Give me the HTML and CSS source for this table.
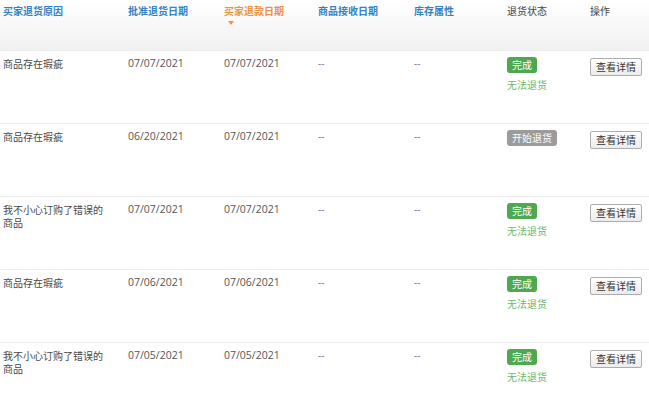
FILE: index.html
```html
<!DOCTYPE html>
<html lang="zh">
<head>
<meta charset="utf-8">
<link rel="stylesheet" href="styles.css">
</head>
<body>
<div class="table">
  <div class="row head">
    <div class="cell th blue">买家退货原因</div>
    <div class="cell th blue">批准退货日期</div>
    <div class="cell th orange">买家退款日期<span class="caret"></span></div>
    <div class="cell th blue">商品接收日期</div>
    <div class="cell th blue">库存属性</div>
    <div class="cell th dark">退货状态</div>
    <div class="cell th dark">操作</div>
  </div>

  <div class="row">
    <div class="cell reason">商品存在瑕疵</div>
    <div class="cell date">07/07/2021</div>
    <div class="cell date">07/07/2021</div>
    <div class="cell dash">--</div>
    <div class="cell dash">--</div>
    <div class="cell status"><span class="badge ok">完成</span><span class="note">无法退货</span></div>
    <div class="cell action"><button class="btn">查看详情</button></div>
  </div>

  <div class="row">
    <div class="cell reason">商品存在瑕疵</div>
    <div class="cell date">06/20/2021</div>
    <div class="cell date">07/07/2021</div>
    <div class="cell dash">--</div>
    <div class="cell dash">--</div>
    <div class="cell status"><span class="badge gray">开始退货</span></div>
    <div class="cell action"><button class="btn">查看详情</button></div>
  </div>

  <div class="row">
    <div class="cell reason">我不小心订购了错误的商品</div>
    <div class="cell date">07/07/2021</div>
    <div class="cell date">07/07/2021</div>
    <div class="cell dash">--</div>
    <div class="cell dash">--</div>
    <div class="cell status"><span class="badge ok">完成</span><span class="note">无法退货</span></div>
    <div class="cell action"><button class="btn">查看详情</button></div>
  </div>

  <div class="row">
    <div class="cell reason">商品存在瑕疵</div>
    <div class="cell date">07/06/2021</div>
    <div class="cell date">07/06/2021</div>
    <div class="cell dash">--</div>
    <div class="cell dash">--</div>
    <div class="cell status"><span class="badge ok">完成</span><span class="note">无法退货</span></div>
    <div class="cell action"><button class="btn">查看详情</button></div>
  </div>

  <div class="row">
    <div class="cell reason">我不小心订购了错误的商品</div>
    <div class="cell date">07/05/2021</div>
    <div class="cell date">07/05/2021</div>
    <div class="cell dash">--</div>
    <div class="cell dash">--</div>
    <div class="cell status"><span class="badge ok">完成</span><span class="note">无法退货</span></div>
    <div class="cell action"><button class="btn">查看详情</button></div>
  </div>
</div>
</body>
</html>
```

FILE: styles.css
```css
html, body {
  margin: 0;
  padding: 0;
  background: #fff;
  overflow: hidden;
}
body {
  font-family: "Open Sans", "Noto Sans CJK SC", sans-serif;
  font-size: 10px;
  color: #333;
  width: 649px;
  height: 396px;
}
.table {
  display: flex;
  flex-direction: column;
}
.row {
  display: grid;
  grid-template-columns: 125px 96px 94px 96px 93px 83px 62px;
  height: 73px;
  border-top: 1px solid #ececec;
  box-sizing: border-box;
}
.row.head {
  height: 50px;
  border-top: none;
  background: linear-gradient(#ffffff, #f1f1f1);
}
.cell {
  padding: 6px 0 0 3px;
  line-height: 13px;
  font-family: "Noto Sans CJK SC", sans-serif;
  color: #484848;
}
.th {
  padding-top: 4px;
  font-weight: bold;
  line-height: 14px;
  display: flex;
  flex-direction: column;
  align-items: flex-start;
}
.blue { color: #3582c2; }
.orange { color: #ee9240; }
.dark { color: #444; font-weight: normal; }
.caret {
  width: 0;
  height: 0;
  border-left: 3px solid transparent;
  border-right: 3px solid transparent;
  border-top: 4px solid #ee9240;
  margin: 3px 0 0 4px;
}
.reason {
  max-width: 104px;
}
.date {
  font-family: "Open Sans", sans-serif;
  font-size: 10.5px;
  color: #555;
}
.dash {
  font-family: "Open Sans", sans-serif;
  color: #777;
}
.status {
  display: flex;
  flex-direction: column;
  align-items: flex-start;
  gap: 5px;
  padding-top: 6px;
}
.badge {
  display: inline-block;
  height: 16px;
  line-height: 16px;
  padding: 0 5px;
  border-radius: 3px;
  color: #fff;
  font-size: 10px;
}
.badge.ok { background: #4fa84f; }
.badge.gray { background: #9b9b9b; }
.note {
  color: #6db86d;
  line-height: 13px;
}
.action {
  padding-top: 7px;
}
.btn {
  margin: 0;
  height: 18px;
  padding: 0 5px;
  border: 1px solid #adadad;
  border-radius: 2px;
  background: linear-gradient(#ffffff, #ececec);
  font-family: "Noto Sans CJK SC", sans-serif;
  font-size: 10px;
  line-height: 16px;
  color: #333;
  box-sizing: border-box;
}
```
